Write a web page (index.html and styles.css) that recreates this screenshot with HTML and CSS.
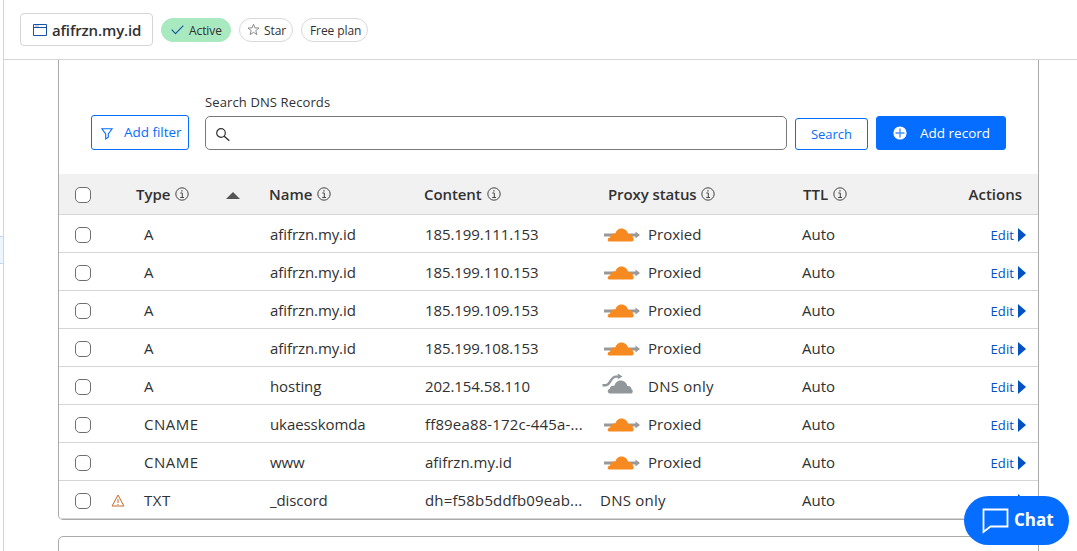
FILE: index.html
```
<!DOCTYPE html>
<html lang="en">
<head>
<meta charset="utf-8">
<title>DNS Records</title>
<link rel="stylesheet" href="styles.css">
</head>
<body>
<svg class="defs" aria-hidden="true">
  <symbol id="info" viewBox="0 0 14 14"><circle cx="7" cy="7" r="6.200" fill="none" stroke="#444" stroke-width="1"/><path d="M5.300 6h2v4.200M5.200 10.500h3.800" fill="none" stroke="#444" stroke-width="1"/><path d="M6.300 3.200h1.300v1.300H6.300z" fill="#444"/></symbol>
  <symbol id="proxied" viewBox="0 0 36 14"><path d="M0 5.600h31.500V3.600L36 7l-4.500 3.400V8.400H0z" fill="#999"/><path d="M5 13.500C3 13.300 3.300 9.600 6.200 9.500 6 6.800 8.700 4.900 11.200 5.800 12.200 2.500 14.400.5 17.300.5c3.700 0 6.100 2.300 6.900 5.600 2.600-.6 4.500 1 4.500 3.200 1.700.6 1.300 4.200-.6 4.200z" fill="#f6891f"/></symbol>
  <symbol id="direct" viewBox="0 0 32 22"><path d="M.5 12.200H4C8.500 12.200 8.500 3.600 14 3.600h3" fill="none" stroke="#92979b" stroke-width="2.400"/><path d="M15.800.6 20.500 3.500 15.800 6.300z" fill="#92979b"/><path d="M8 20.500C5 20.200 5.200 16.500 7.700 16 7.600 13.600 10 12.100 12.200 12.900 13.300 9.500 15.600 7.600 18.500 7.600c3.800 0 6.200 2.500 6.700 5.400 2.600-.5 4.300.9 4.300 3.200 1.900.9 1.600 4.300-.6 4.300z" fill="#92979b"/></symbol>
</svg>
<div class="app">
  <aside class="rail"><div class="rail-item"></div></aside>
  <div class="page">
    <header class="topbar">
      <div class="domain">
        <svg width="14" height="12" viewBox="0 0 14 12" fill="none" stroke="#1552a8"><path d="M.5.5h13v11H.5zM.5 3.500h13" /><path d="M2 2h4" stroke="#86a8d4"/></svg>
        <span>afifrzn.my.id</span>
      </div>
      <div class="pill pill-active"><svg width="13" height="10" viewBox="0 0 13 10" fill="none" stroke="#1552a8" stroke-width="1.100"><path d="M.7 4.700 4.500 8.700 12.300.7"/></svg><span>Active</span></div>
      <div class="pill pill-star"><svg width="13" height="13" viewBox="0 0 13 13" fill="none" stroke="#8c8c8c"><path d="m6.500 1.200 1.400 3.700 4.100.1-3.200 2.600 1.100 4-3.400-2.300-3.400 2.300 1.100-4L1 5l4.100-.1z"/></svg><span>Star</span></div>
      <div class="pill pill-plan"><span>Free plan</span></div>
    </header>
    <main class="content">
      <section class="card">
        <div class="toolbar">
          <button class="btn btn-filter"><svg width="12" height="12" viewBox="0 0 12 12" fill="none" stroke="#056dff" stroke-width="1.100"><path d="M.9.800h10.200L7.300 6v3.300L4.700 11V6z"/></svg><span>Add filter</span></button>
          <div class="field">
            <label>Search DNS Records</label>
            <div class="search"><svg width="14" height="14" viewBox="0 0 14 14" fill="none" stroke="#333" stroke-width="1.200"><circle cx="5" cy="5" r="4.300"/><path d="m8 8 5.300 4.800" stroke-width="1.400"/></svg></div>
          </div>
          <button class="btn btn-search"><span>Search</span></button>
          <button class="btn btn-add"><svg width="14" height="14" viewBox="0 0 14 14"><circle cx="7" cy="7" r="6.600" fill="#fff"/><path d="M7 2.500v9M2.500 7h9" stroke="#4a94ff" stroke-width="1.400"/></svg><span>Add record</span></button>
        </div>
        <div class="row head">
          <i class="check"></i><span></span>
          <div class="type"><span class="h-type">Type</span><svg class="info"><use href="#info"/></svg><svg class="sort" width="14" height="7" viewBox="0 0 14 7"><path d="M0 7 7 0l7 7z" fill="#555"/></svg></div>
          <div><span class="h-name">Name</span><svg class="info"><use href="#info"/></svg></div>
          <div><span class="h-content">Content</span><svg class="info"><use href="#info"/></svg></div>
          <div class="h-proxy"><span>Proxy status</span><svg class="info"><use href="#info"/></svg></div>
          <div class="h-ttl"><span>TTL</span><svg class="info"><use href="#info"/></svg></div>
          <div class="h-actions">Actions</div>
        </div>
        <div class="row"><i class="check"></i><span></span><div class="type">A</div><div class="name">afifrzn.my.id</div><div class="value ip">185.199.111.153</div><div class="proxy"><svg class="cloud"><use href="#proxied"/></svg><span>Proxied</span></div><div>Auto</div><a class="edit">Edit<b></b></a></div>
        <div class="row"><i class="check"></i><span></span><div class="type">A</div><div class="name">afifrzn.my.id</div><div class="value ip">185.199.110.153</div><div class="proxy"><svg class="cloud"><use href="#proxied"/></svg><span>Proxied</span></div><div>Auto</div><a class="edit">Edit<b></b></a></div>
        <div class="row"><i class="check"></i><span></span><div class="type">A</div><div class="name">afifrzn.my.id</div><div class="value ip">185.199.109.153</div><div class="proxy"><svg class="cloud"><use href="#proxied"/></svg><span>Proxied</span></div><div>Auto</div><a class="edit">Edit<b></b></a></div>
        <div class="row"><i class="check"></i><span></span><div class="type">A</div><div class="name">afifrzn.my.id</div><div class="value ip">185.199.108.153</div><div class="proxy"><svg class="cloud"><use href="#proxied"/></svg><span>Proxied</span></div><div>Auto</div><a class="edit">Edit<b></b></a></div>
        <div class="row"><i class="check"></i><span></span><div class="type">A</div><div class="name">hosting</div><div class="value ip">202.154.58.110</div><div class="proxy dns"><svg class="cloud cloud-direct"><use href="#direct"/></svg><span>DNS only</span></div><div>Auto</div><a class="edit">Edit<b></b></a></div>
        <div class="row"><i class="check"></i><span></span><div class="type cname">CNAME</div><div class="name">ukaesskomda</div><div class="value long">ff89ea88-172c-445a-...</div><div class="proxy"><svg class="cloud"><use href="#proxied"/></svg><span>Proxied</span></div><div>Auto</div><a class="edit">Edit<b></b></a></div>
        <div class="row"><i class="check"></i><span></span><div class="type cname">CNAME</div><div class="name">www</div><div class="value">afifrzn.my.id</div><div class="proxy"><svg class="cloud"><use href="#proxied"/></svg><span>Proxied</span></div><div>Auto</div><a class="edit">Edit<b></b></a></div>
        <div class="row"><i class="check"></i><svg class="warning" width="14" height="13" viewBox="0 0 14 13" fill="none" stroke="#c8692b"><path d="m7 1 5.900 11H1.100z"/><path d="M7 5v4M7 10v1"/></svg><div class="type cname">TXT</div><div class="name">_discord</div><div class="value long">dh=f58b5ddfb09eab...</div><div class="proxy dns"><span>DNS only</span></div><div>Auto</div><a class="edit"><b></b></a></div>
      </section>
      <section class="card next"></section>
    </main>
  </div>
</div>
<button class="chat"><svg width="27" height="26" viewBox="0 0 27 26" fill="none" stroke="#fff" stroke-width="1.800"><path d="M1.500 1.500h24v17H8.500l-7 5.500z"/></svg><span>Chat</span></button>
</body>
</html>
```
FILE: styles.css
```
* { box-sizing: border-box; }
body { margin: 0; height: 551px; overflow: hidden; background: #fff; color: #313131; font: 15px/20px "Open Sans", "Noto Sans", sans-serif; }
svg { display: block; flex: none; }
.defs { position: absolute; width: 0; height: 0; }
.app { display: flex; height: 551px; }
.rail { width: 4px; flex: none; border-right: 1px solid #d5d5d5; padding-top: 236px; }
.rail-item { height: 28px; background: #edf5ff; border: solid #bcd8f8; border-width: 1px 0; }
.page { flex: 1; min-width: 0; }
.topbar { height: 60px; border-bottom: 1px solid #d5d5d5; display: flex; align-items: center; padding-left: 16px; gap: 8px; }
.domain { width: 133px; height: 33px; border: 1px solid #d5d5d5; border-radius: 4px; display: flex; align-items: center; padding: 0 0 0 12px; gap: 5px; font-size: 15px; font-weight: 600; letter-spacing: -.13px; white-space: nowrap; }
.domain svg { margin-top: 1px; }
.pill { height: 24px; border: 1px solid #d9d9d9; border-radius: 12px; display: flex; align-items: center; font-size: 12px; white-space: nowrap; letter-spacing: -.1px; }
.pill span { padding-top: 2px; }
.pill-active { width: 70px; background: #a8e9c0; border-color: #a8e9c0; padding-left: 9px; gap: 5px; }
.pill-star { width: 54px; padding-left: 7px; gap: 4px; letter-spacing: -.3px; }
.pill-plan { width: 67px; padding-left: 8px; letter-spacing: -.48px; }
.pill-plan { letter-spacing: -.4px; }
.content { padding-left: 54px; }
.pill-active, .pill-star, .pill-plan { letter-spacing: -.08px; }
.card { width: 981px; height: 460px; border: 1px solid #aaa; border-top: 0; border-radius: 0 0 5px 5px; }
.card.next { height: 40px; margin-top: 16px; border-top: 1px solid #aaa; border-radius: 5px 5px 0 0; }
.toolbar { height: 114px; padding: 32px 32px 24px; display: flex; align-items: flex-end; }
.btn { font: 14px/20px "Open Sans", "Noto Sans", sans-serif; border: 1px solid #056dff; border-radius: 3px; color: #056dff; background: #fff; padding: 0; display: flex; align-items: center; white-space: nowrap; }
.btn-filter { width: 98px; height: 35px; padding: 0 0 2px 9px; gap: 11px; font-size: 13.500px; letter-spacing: -.03px; }
.btn-filter svg { margin-top: 4px; }
.field { width: 582px; margin: 0 8px 0 16px; }
.field label { display: block; height: 24px; font-size: 13px; line-height: 20px; letter-spacing: .12px; }
.search { height: 34px; border: 1px solid #797979; border-radius: 5px; padding: 11px 0 0 10px; }
.btn-search { width: 73px; height: 32px; justify-content: center; font-size: 13px; }
.btn-add { width: 130px; height: 34px; margin-left: 8px; background: #056dff; color: #fff; padding-left: 16px; gap: 13px; font-size: 13.500px; }
.row { height: 38px; border-bottom: 1px solid #d5d5d5; display: grid; grid-template-columns: 52px 25px 133px 155px 176px 202px 60px 1fr; align-items: center; padding-top: 1px; white-space: nowrap; }
.check { width: 16px; height: 16px; border: 1px solid #6f6f6f; border-radius: 5px; background: #fff; margin: 2px 0 0 16px; }
.row .type { padding-left: 8px; }
.row .cname { letter-spacing: .5px; }
.name { padding-left: 1px; letter-spacing: -.08px; }
.ip { letter-spacing: -.08px; }
.value { padding-left: 1px; }
.long { letter-spacing: .15px; }
.proxy { display: flex; align-items: center; }
.dns { letter-spacing: .25px; }
.cloud { width: 36px; height: 14px; margin: 1px 8px 0 4px; }
.cloud-direct { width: 32px; height: 22px; margin: -5px 14px 0 2px; }
.warning { margin-top: 1px; }
.edit { justify-self: end; display: flex; align-items: center; gap: 4px; padding: 2px 12px 0 0; font-size: 13px; letter-spacing: .1px; color: #0051c3; }
.edit b { border-left: 8px solid #0051c3; border-top: 7px solid transparent; border-bottom: 7px solid transparent; }
.head { height: 41px; background: #f1f1f1; font-weight: 600; padding: 0 0 1px; }
.head > div { display: flex; align-items: center; gap: 5px; }
.row.head .type { padding-left: 0; }
.head .sort { margin: 3px 0 0 32px; }
.row .h-proxy { padding-left: 8px; gap: 4px; letter-spacing: -.1px; }
.h-content { letter-spacing: -.1px; }
.row .h-ttl { padding-left: 1px; }
.row .h-actions { justify-self: end; padding-right: 16px; }
.info { width: 14px; height: 14px; }
.chat { position: absolute; left: 964px; top: 496px; width: 105px; height: 49px; border: 0; border-radius: 25px; background: #056dff; color: #fff; display: flex; align-items: center; padding: 0 0 1px 18px; gap: 5px; font: 700 17px/20px "Open Sans", "Noto Sans", sans-serif; }
.chat svg { margin-top: 1px; }
```
